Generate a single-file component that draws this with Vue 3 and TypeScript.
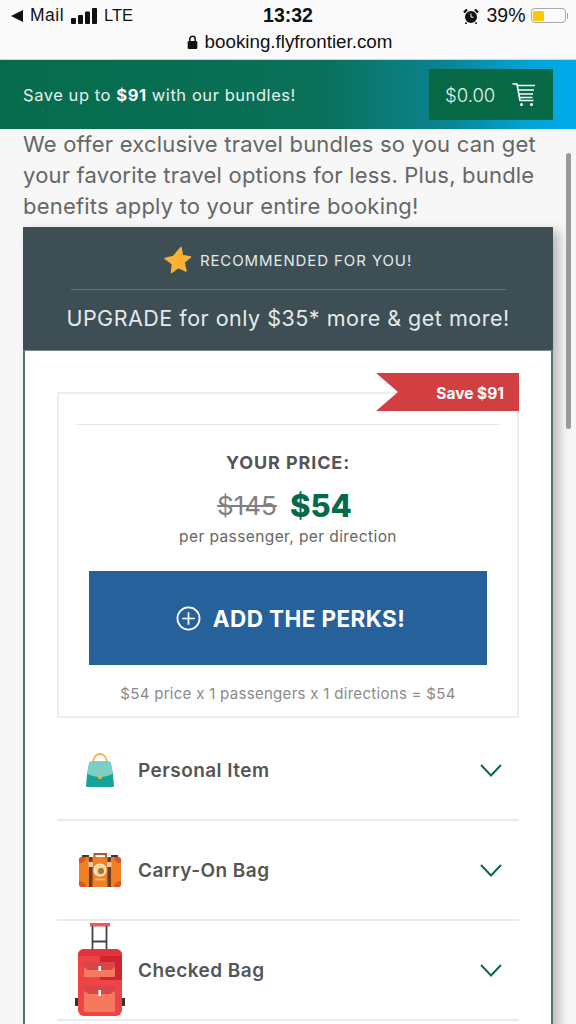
<script setup lang="ts">
interface Perk { name: string; icon: string }
const perks: Perk[] = [
  { name: 'Personal Item', icon: 'purse' },
  { name: 'Carry-On Bag', icon: 'case' },
  { name: 'Checked Bag', icon: 'trolley' },
]
</script>

<template>
  <div class="page">
    <header class="chrome">
      <div class="status">
        <div class="status-left">
          <svg class="back" viewBox="0 0 12 12" width="12" height="12"><path d="M0 6 12 0v12z" fill="#111" /></svg>
          <span>Mail</span>
          <svg class="signal" viewBox="0 0 27 16" width="27" height="16"><g fill="#111"><rect x="0" y="10" width="5" height="6" rx="1" /><rect x="7" y="7" width="5" height="9" rx="1" /><rect x="14" y="3.500" width="5" height="12.500" rx="1" /><rect x="21" y="0" width="5" height="16" rx="1" /></g></svg>
          <span class="lte">LTE</span>
        </div>
        <div class="time">13:32</div>
        <div class="status-right">
          <svg viewBox="0 0 16 16" width="16" height="16"><circle cx="8" cy="9" r="6" fill="#111" /><path d="M1 4.500 4 1.500M15 4.500 12 1.500" stroke="#111" stroke-width="2.400" /><path d="M8 5.500V9.200H10.600" stroke="#fff" stroke-width="1" fill="none" /><path d="M3.500 14.500 2.500 16M12.500 14.500 13.500 16" stroke="#111" stroke-width="1.600" /></svg>
          <span class="pct">39%</span>
          <div class="battery"><div class="battery-fill" /></div>
          <div class="battery-tip" />
        </div>
      </div>
      <div class="url">
        <svg viewBox="0 0 10 13" width="11" height="14"><path d="M2.500 6V3.600a2.500 2.500 0 0 1 5 0V6" fill="none" stroke="#111" stroke-width="1.400" /><rect x="0.500" y="5.500" width="9" height="7.500" rx="1.200" fill="#111" /></svg>
        <span>booking.flyfrontier.com</span>
      </div>
    </header>

    <section class="banner">
      <p class="banner-text">Save up to <b>$91</b> with our bundles!</p>
      <div class="cart">
        <span>$0.00</span>
        <svg viewBox="0 0 24 24" width="24" height="26" fill="none" stroke="#fff" stroke-width="1.600"><path d="M0.500 1 5 1 8 17.500H21.500" /><path d="M4.500 2.500H23M6 7H22M7 11H21M8 14.500H20.500" /><circle cx="9.500" cy="21.500" r="1.500" fill="#fff" stroke="none" /><circle cx="19.500" cy="21.500" r="1.500" fill="#fff" stroke="none" /></svg>
      </div>
    </section>

    <main class="content">
      <p class="intro">We offer exclusive travel bundles so you can get your favorite travel options for less. Plus, bundle benefits apply to your entire booking!</p>

      <article class="card">
        <div class="card-head">
          <div class="rec">
            <svg viewBox="0 0 28 28" width="28" height="28"><path d="M17 1.500 18.400 9.500 26.500 11 20 16.500 22 25 14.500 21.500 7.500 26.500 8.400 18 1 12.500 9.500 10.500Z" fill="#f9b233" stroke="#f9b233" stroke-width="1.500" stroke-linejoin="round" /></svg>
            <span>RECOMMENDED FOR YOU!</span>
          </div>
          <div class="head-rule" />
          <div class="upgrade">UPGRADE for only $35* more &amp; get more!</div>
        </div>

        <div class="card-body">
          <div class="pricebox">
            <div class="ribbon">Save $91</div>
            <div class="inner-rule" />
            <div class="your-price">YOUR PRICE:</div>
            <div class="prices"><s class="old">$145</s><b class="new">$54</b></div>
            <div class="per">per passenger, per direction</div>
            <button class="add" type="button">
              <svg viewBox="0 0 26 26" width="25" height="25" fill="none" stroke="#fff" stroke-width="1.800"><circle cx="13" cy="13" r="11.500" /><path d="M13 6.500V19.500M6.500 13H19.500" /></svg>
              <span>ADD THE PERKS!</span>
            </button>
            <div class="calc">$54 price x 1 passengers x 1 directions = $54</div>
          </div>

          <div class="perks">
            <div v-for="p in perks" :key="p.name" class="perk">
              <div class="perk-icon">
                <svg v-if="p.icon === 'purse'" viewBox="0 0 28 34" width="28" height="34">
                  <path d="M7 11C7 4.500 10 1 14 1s7 3.500 7 10" fill="none" stroke="#f5b345" stroke-width="1.800" />
                  <path d="M3 11a2.500 2.500 0 0 1 2.500-2.500H22.500A2.500 2.500 0 0 1 25 11L27 22 28 32.500a1.500 1.500 0 0 1-1.500 1.500H1.500A1.500 1.500 0 0 1 0 32.500L1 22Z" fill="#13a596" />
                  <path d="M3 11a2.500 2.500 0 0 1 2.500-2.500H22.500A2.500 2.500 0 0 1 25 11L27 20.500C20 25 8 25 1 20.500Z" fill="#7dcfc6" />
                  <rect x="12.200" y="22" width="3.600" height="4" rx="1" fill="#f5b345" />
                </svg>
                <svg v-else-if="p.icon === 'case'" viewBox="0 0 42 34" width="42" height="34">
                  <path d="M15.500 4V1H27V4" fill="none" stroke="#b5563a" stroke-width="2" />
                  <rect x="3" y="2" width="7" height="3" fill="#3d3a3a" />
                  <rect x="32" y="2" width="7" height="3" fill="#3d3a3a" />
                  <rect x="0" y="4" width="42" height="30" rx="3" fill="#f07f23" />
                  <path d="M0 10V7a3 3 0 0 1 3-3H7a6.500 6.500 0 0 1-7 6ZM42 10V7a3 3 0 0 0-3-3H35a6.500 6.500 0 0 0 7 6ZM0 28v3a3 3 0 0 0 3 3H7a6.500 6.500 0 0 0-7-6ZM42 28v3a3 3 0 0 1-3 3H35a6.500 6.500 0 0 1 7-6Z" fill="#d4562a" />
                  <rect x="10" y="4" width="3.500" height="30" fill="#6d3b24" />
                  <rect x="28.500" y="4" width="3.500" height="30" fill="#6d3b24" />
                  <rect x="9.500" y="9" width="4.500" height="5" fill="#f2c6a0" />
                  <rect x="28" y="9" width="4.500" height="5" fill="#f2c6a0" />
                  <circle cx="21" cy="17" r="6" fill="#fbd68a" stroke="#f6efe2" stroke-width="1.200" />
                  <circle cx="22" cy="18" r="3" fill="#a8703f" />
                  <rect x="16" y="25.500" width="10" height="2" fill="#f7b061" />
                </svg>
                <svg v-else viewBox="0 0 50 94" width="50" height="94">
                  <rect x="15" y="0" width="20" height="3.500" fill="#ee5a55" />
                  <path d="M17.500 3V28M31.500 3V28M17.500 18.500H31.500" stroke="#444" stroke-width="1.800" fill="none" />
                  <rect x="0" y="75" width="4" height="8" fill="#333" />
                  <rect x="46" y="75" width="4" height="8" fill="#333" />
                  <rect x="3" y="26" width="44" height="67" rx="6" fill="#ee4445" />
                  <rect x="25" y="30" width="22" height="27" fill="#d2242a" />
                  <path d="M3 32a6 6 0 0 1 6-6H41a6 6 0 0 1 6 6v1H3Z" fill="#e2343a" />
                  <rect x="9" y="39" width="31" height="15" fill="#f4795f" />
                  <path d="M9 39H40V44L36 47H13L9 44Z" fill="#d9464a" />
                  <rect x="23.500" y="43" width="2.500" height="5" fill="#fff" />
                  <rect x="9" y="62" width="31" height="27" fill="#f4795f" />
                  <path d="M9 62H40V68L35 71H14L9 68Z" fill="#d9464a" />
                  <rect x="23.500" y="67" width="2.500" height="6" fill="#fff" />
                </svg>
              </div>
              <span class="perk-name">{{ p.name }}</span>
              <svg class="chev" viewBox="0 0 22 13" width="22" height="13"><path d="M1 1 11 11.500 21 1" fill="none" stroke="#0a6a4c" stroke-width="2" /></svg>
            </div>
          </div>
        </div>
      </article>
    </main>

    <div class="scrollbar" />
  </div>
</template>

<style>
html, body { margin: 0; padding: 0; }
</style>

<style scoped>
.page {
  position: relative;
  width: 576px;
  height: 1024px;
  overflow: hidden;
  background: #f7f7f7;
  font-family: "Inter", "Liberation Sans", sans-serif;
  color: #555;
}
.chrome {
  height: 59px;
  background: #fafafa;
  border-bottom: 1px solid #c9d6d2;
  font-family: "Liberation Sans", Arial, sans-serif;
  color: #111;
}
.status {
  position: relative;
  height: 31px;
  display: flex;
  align-items: center;
  justify-content: space-between;
  padding: 0 8px 0 11px;
  font-size: 17.500px;
}
.status-left { display: flex; align-items: center; gap: 7px; }
.status-left span:first-of-type { letter-spacing: 0.500px; }
.lte { font-size: 16.500px; margin-left: -1px; }
.time {
  position: absolute;
  left: 0;
  right: 0;
  text-align: center;
  font-weight: 700;
  font-size: 19.500px;
}
.status-right { display: flex; align-items: center; gap: 7px; }
.pct { font-size: 19.500px; margin-right: -2px; }
.battery {
  width: 35px;
  height: 15px;
  box-sizing: border-box;
  border: 1.500px solid #a8a8a8;
  border-radius: 4px;
  padding: 1.500px;
}
.battery-fill { width: 11px; height: 100%; background: #fdc800; border-radius: 1.500px; }
.battery-tip { width: 1.500px; height: 6px; background: #a8a8a8; margin-left: -6px; }
.url {
  height: 22px;
  display: flex;
  align-items: center;
  justify-content: center;
  gap: 7px;
  padding-left: 3px;
  font-size: 18.800px;
}
.banner {
  height: 69px;
  box-sizing: border-box;
  display: flex;
  align-items: center;
  justify-content: space-between;
  padding: 0 23px 0 23px;
  background: linear-gradient(90deg, #066c4c 0%, #0a7058 55%, #0a8593 78%, #04a4d6 92%, #00abeb 100%);
  color: #e6f1ee;
}
.banner-text { margin: 1px 0 0; font-size: 16.500px; letter-spacing: 0.560px; font-weight: 400; }
.banner-text b { color: #fff; font-weight: 700; }
.cart {
  width: 124px;
  height: 51px;
  box-sizing: border-box;
  background: #066844;
  display: flex;
  align-items: center;
  gap: 17px;
  padding-left: 16px;
  font-size: 18.500px;
  font-weight: 300;
}
.content { padding: 0 23px; }
.intro {
  margin: 0 0 5px;
  font-size: 22px;
  line-height: 31px;
  color: #666;
  letter-spacing: 0.200px;
}
.card {
  background: #fff;
  border: solid #5d6e75;
  border-width: 0 2px;
  box-shadow: 6px 4px 10px rgba(0, 0, 0, 0.25);
}
.card-head {
  height: 124px;
  box-sizing: border-box;
  margin: 0 -2px;
  background: #3e4e55;
  border-bottom: 1px solid #7c8b91;
  color: #e4e9ea;
  padding-top: 18px;
  display: flex;
  flex-direction: column;
  align-items: center;
}
.rec { display: flex; align-items: center; gap: 8px; height: 30px; font-size: 15px; letter-spacing: 0.900px; font-weight: 400; }
.head-rule { width: 435px; height: 1px; background: #5f7279; margin-top: 14px; }
.upgrade { margin-top: 15px; font-size: 21.500px; letter-spacing: 0.500px; white-space: nowrap; font-weight: 400; }
.card-body { padding: 41px 32px 40px; }
.pricebox {
  position: relative;
  height: 326px;
  box-sizing: border-box;
  border: 2px solid #eeeeee;
  display: flex;
  flex-direction: column;
  align-items: center;
  padding: 30px 18px 0;
}
.ribbon {
  position: absolute;
  top: -21px;
  right: -2px;
  width: 143px;
  height: 38px;
  box-sizing: border-box;
  background: #d23f42;
  clip-path: polygon(0 0, 100% 0, 100% 100%, 0 100%, 22px 50%);
  color: #fff;
  font-weight: 700;
  font-size: 15.500px;
  line-height: 38px;
  text-align: right;
  padding: 2px 15px 0 0;
}
.inner-rule { width: 100%; height: 1px; background: #e6e6e6; }
.your-price { margin-top: 28px; font-size: 18px; letter-spacing: 0.900px; font-weight: 700; line-height: 20px; color: #555; }
.prices { margin-top: 11px; display: flex; align-items: center; gap: 13px; height: 42px; padding-right: 7px; }
.old { font-size: 26px; color: #808080; font-weight: 400; }
.new { font-size: 31px; color: #046a49; font-weight: 800; }
.per { margin-top: 2px; font-size: 15.500px; letter-spacing: 0.400px; line-height: 18px; color: #666; font-weight: 400; }
.add {
  margin-top: 25px;
  width: 398px;
  height: 94px;
  flex: none;
  border: none;
  background: #26619c;
  color: #fff;
  display: flex;
  align-items: center;
  justify-content: center;
  gap: 12px;
  font-family: inherit;
  font-size: 22.500px;
  letter-spacing: 0.400px;
  font-weight: 700;
  padding: 1px 0 0 5px;
}
.calc { margin-top: 20px; font-size: 15px; letter-spacing: 0.300px; line-height: 18px; color: #8a8a8a; white-space: nowrap; font-weight: 400; }
.perks { padding-top: 3px; }
.perk {
  position: relative;
  height: 100px;
  box-sizing: border-box;
  border-bottom: 2px solid #eaeaea;
  display: flex;
  align-items: center;
  padding-right: 17px;
}
.perk-icon {
  width: 81px;
  box-sizing: border-box;
  padding-left: 5px;
  flex: none;
  display: flex;
  justify-content: center;
  align-items: center;
  height: 40px;
}
.perk-name { flex: 1; font-size: 19px; font-weight: 600; color: #555; letter-spacing: 0.450px; }
.scrollbar {
  position: absolute;
  left: 566px;
  top: 153px;
  width: 5px;
  height: 276px;
  border-radius: 3px;
  background: #9a9a9a;
}
</style>
